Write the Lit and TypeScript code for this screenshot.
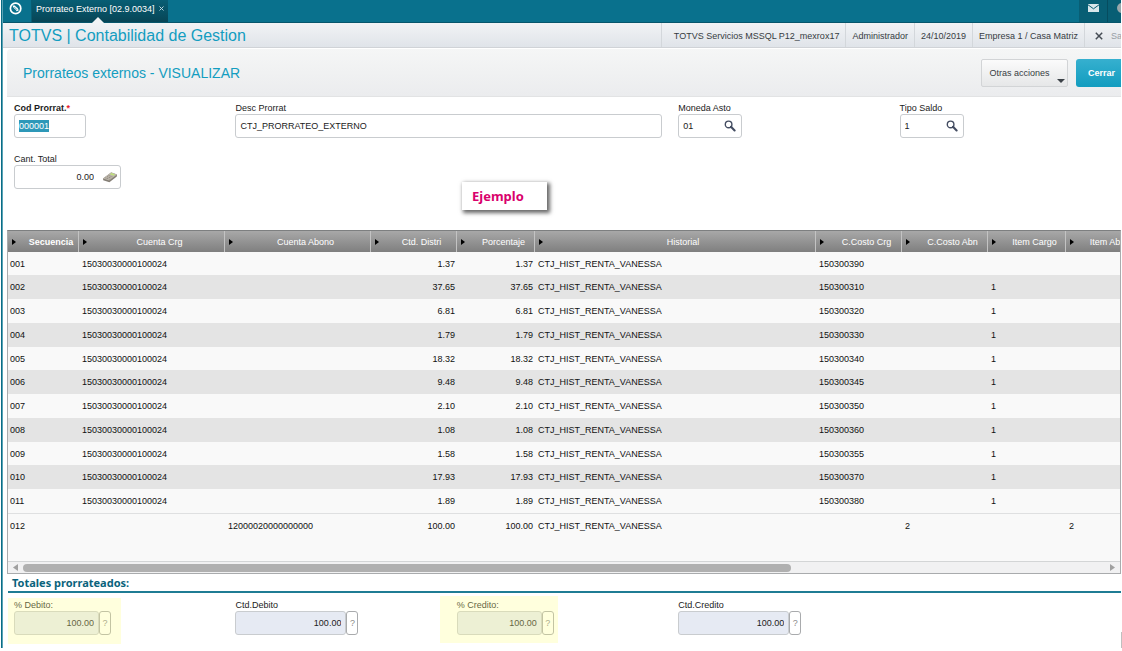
import { LitElement, html, css, svg } from "lit";
import { customElement, state, query } from "lit/decorators.js";
import { classMap } from "lit/directives/class-map.js";

interface Column {
  key: string;
  title: string;
  cls: string;
  numeric?: boolean;
}

const COLUMNS: Column[] = [
  { key: "seq", title: "Secuencia", cls: "w-seq" },
  { key: "charge", title: "Cuenta Crg", cls: "w-account" },
  { key: "credit", title: "Cuenta Abono", cls: "w-account" },
  { key: "qty", title: "Ctd. Distri", cls: "w-cost", numeric: true },
  { key: "pct", title: "Porcentaje", cls: "w-item", numeric: true },
  { key: "history", title: "Historial", cls: "w-history" },
  { key: "costCharge", title: "C.Costo Crg", cls: "w-cost" },
  { key: "costCredit", title: "C.Costo Abn", cls: "w-cost" },
  { key: "itemCharge", title: "Item Cargo", cls: "w-item" },
  { key: "itemCredit", title: "Item Abono", cls: "w-item" },
];

type Row = Record<string, string>;

const charge = (seq: string, pct: string, cost: string, item = "1"): Row => ({
  seq,
  charge: "15030030000100024",
  qty: pct,
  pct,
  history: "CTJ_HIST_RENTA_VANESSA",
  costCharge: cost,
  itemCharge: item,
});

const ROWS: Row[] = [
  charge("001", "1.37", "150300390", ""),
  charge("002", "37.65", "150300310"),
  charge("003", "6.81", "150300320"),
  charge("004", "1.79", "150300330"),
  charge("005", "18.32", "150300340"),
  charge("006", "9.48", "150300345"),
  charge("007", "2.10", "150300350"),
  charge("008", "1.08", "150300360"),
  charge("009", "1.58", "150300355"),
  charge("010", "17.93", "150300370"),
  charge("011", "1.89", "150300380"),
  {
    seq: "012",
    credit: "12000020000000000",
    qty: "100.00",
    pct: "100.00",
    history: "CTJ_HIST_RENTA_VANESSA",
    costCredit: "2",
    itemCredit: "2",
  },
];

const reset = css`
  *,
  *::before,
  *::after {
    box-sizing: border-box;
  }
  button,
  input {
    font: inherit;
    color: inherit;
    margin: 0;
    padding: 0;
    border: 0;
    background: none;
    outline: none;
  }
  svg {
    display: block;
  }
`;

const magnifier = svg`<svg width="12" height="12" viewBox="0 0 12 12" fill="none" stroke="#434c61">
  <circle cx="4.6" cy="4.4" r="3.3" stroke-width="1.4" />
  <path d="M7 6.8 L10.6 10.4" stroke-width="2.1" stroke-linecap="round" />
</svg>`;

const calculator = svg`<svg width="16" height="12" viewBox="0 0 16 12">
  <path d="M1 7.6 L9.2 1.4 L15 3.6 L14.8 5.4 L7.4 11.2 L1.2 9.2 Z" fill="#847e75" />
  <path d="M1 7.4 L9.2 1.2 L15 3.4 L7.2 9.4 Z" fill="#bdb7ac" />
  <path d="M7.8 3.3 L9.5 2 L13.2 3.4 L11.6 4.7 Z" fill="#bfe07c" />
  <path d="M3.4 6.8 L7.6 8.3 M5 5.6 L9.2 7.1 M6.6 4.5 L10.6 6" stroke="#857e74" stroke-width="0.8" stroke-dasharray="1.2 0.7" />
</svg>`;

@customElement("app-header")
class AppHeader extends LitElement {
  static styles = [
    reset,
    css`
      :host {
        display: block;
      }
      .top {
        display: flex;
        height: 23px;
        background: #09718d;
        border-bottom: 1px solid #07566c;
        color: #fff;
      }
      .logo {
        width: 28px;
        padding: 2px 0 0 6px;
      }
      .tab {
        position: relative;
        display: flex;
        align-items: center;
        gap: 3px;
        padding: 0 2px 5px 4px;
        border-left: 1px solid #085c72;
        background: linear-gradient(#085e74, #074556);
      }
      .tab::after {
        content: "";
        position: absolute;
        left: 60px;
        bottom: -1px;
        border: 6px solid transparent;
        border-top: 0;
        border-bottom-color: #f1f3f5;
      }
      .close {
        width: 8px;
        height: 8px;
        display: grid;
        place-items: center;
      }
      .tools {
        margin-left: auto;
        display: flex;
        background: #085e74;
      }
      .tool {
        width: 28px;
        display: grid;
        place-items: center;
        padding-bottom: 6px;
      }
      .tool.last {
        width: 14px;
        overflow: hidden;
        justify-content: end;
        border-left: 1px solid #064c5f;
      }
      .info {
        display: flex;
        align-items: stretch;
        height: 25px;
        background: linear-gradient(#f1f3f5, #e0e4e9);
        border-bottom: 1px solid #d0d3d7;
      }
      h1 {
        margin: 0;
        padding-left: 6px;
        font-size: 16px;
        line-height: 26px;
        font-weight: 400;
        color: #139dc0;
        white-space: nowrap;
        flex: 1;
      }
      .facts {
        display: flex;
        margin: 0;
        padding: 0;
        list-style: none;
        line-height: 26px;
        color: #363c42;
        white-space: nowrap;
      }
      .facts li {
        padding: 0 6px;
        border-left: 1px solid #d3d7db;
      }
      .facts li:first-child {
        padding-left: 12px;
      }
      .facts .leave {
        width: 37px;
        padding: 0 0 0 10px;
        overflow: hidden;
      }
      .exit {
        display: flex;
        align-items: center;
        gap: 8px;
        height: 25px;
        color: #979ea5;
      }
    `,
  ];

  render() {
    return html`
      <div class="top">
        <div class="logo">
          <svg width="14" height="14" viewBox="0 0 14 14" fill="none" stroke="#fff">
            <circle cx="6.6" cy="6.4" r="5.2" stroke-width="1.7" />
            <path d="M3.6 3.6 L6 3.6 C7 5.6 9 5 9.7 8.6 L7.4 9.3 C7 6.6 4.4 7.4 3.6 3.6 Z" fill="#fff" stroke="none" />
            <path d="M5.2 5 L8.2 8" stroke="#09718d" stroke-width="0.6" />
          </svg>
        </div>
        <div class="tab">
          <span>Prorrateo Externo [02.9.0034]</span>
          <button class="close" aria-label="Cerrar pestaña">
            <svg width="5" height="5" viewBox="0 0 5 5" stroke="#b9d5dd"><path d="M0.5 0.5 L4.5 4.5 M4.5 0.5 L0.5 4.5" /></svg>
          </button>
        </div>
        <div class="tools">
          <button class="tool" aria-label="Mensajes">
            <svg width="11" height="8" viewBox="0 0 11 8">
              <rect width="11" height="8" fill="#d9e6ea" />
              <path d="M0 0.8 L5.5 4.8 L11 0.8" fill="none" stroke="#085e74" stroke-width="1" />
            </svg>
          </button>
          <button class="tool last" aria-label="Ayuda">
            <svg width="4" height="10" viewBox="0 0 4 10"><circle cx="5" cy="5" r="5" fill="#9aa7ab" /></svg>
          </button>
        </div>
      </div>
      <div class="info">
        <h1>TOTVS | Contabilidad de Gestion</h1>
        <ul class="facts">
          <li>TOTVS Servicios MSSQL P12_mexrox17</li>
          <li>Administrador</li>
          <li>24/10/2019</li>
          <li>Empresa 1 / Casa Matriz</li>
          <li class="leave">
            <button class="exit">
              <svg width="8" height="8" viewBox="0 0 8 8" stroke="#454c54" stroke-width="1.5"><path d="M0.8 0.8 L7.2 7.2 M7.2 0.8 L0.8 7.2" /></svg>
              Salir
            </button>
          </li>
        </ul>
      </div>
    `;
  }
}

@customElement("entry-grid")
class EntryGrid extends LitElement {
  @state() private rows = ROWS;

  static styles = [
    reset,
    css`
      :host {
        display: block;
        border: 1px solid #a9abad;
        border-top-color: #7d7f80;
        overflow: hidden;
        background: #f9f9f9;
      }
      .clip {
        overflow: hidden;
        height: 330px;
      }
      table {
        table-layout: fixed;
        border-collapse: separate;
        border-spacing: 0;
        width: 1136px;
      }
      .w-seq {
        width: 71px;
      }
      .w-account {
        width: 146px;
      }
      .w-cost {
        width: 86px;
      }
      .w-item {
        width: 78px;
      }
      .w-history {
        width: 281px;
      }
      th {
        height: 21px;
        padding: 0 0 0 4px;
        font-weight: 400;
        color: #fff;
        background: linear-gradient(#a8a8a8, #7f7f7f);
        border-right: 1px solid #c3c3c3;
      }
      th:first-child {
        font-weight: 700;
      }
      .head {
        display: flex;
        align-items: center;
        gap: 8px;
        white-space: nowrap;
      }
      .head span {
        flex: 1;
        text-align: center;
      }
      .head i {
        border: 3px solid transparent;
        border-left: 4px solid #000;
        border-right: 0;
      }
      td {
        height: 24px;
        padding: 0 3px;
        line-height: 12px;
        white-space: nowrap;
        color: #111;
      }
      td:first-child {
        padding-left: 2px;
      }
      tr:nth-child(4n + 1) td {
        height: 23px;
      }
      tr:nth-child(even) td {
        background: #e4e4e4;
      }
      td.num {
        text-align: right;
        padding-right: 2px;
      }
      tr.current td {
        height: 48px;
        padding-top: 6px;
        vertical-align: top;
        background: #f9f9f9;
        border-top: 1px solid #dfe0e1;
      }
      .scroll {
        display: flex;
        align-items: center;
        height: 12px;
        background: #f1f1f2;
        border-top: 1px solid #d3d5d6;
      }
      .arrow {
        width: 15px;
        display: grid;
        place-items: center;
      }
      .track {
        flex: 1;
      }
      .thumb {
        width: 71%;
        height: 8px;
        border-radius: 4px;
        background: #b0b0b0;
      }
    `,
  ];

  render() {
    return html`
      <div class="clip">
        <table>
          <colgroup>
            ${COLUMNS.map((c) => html`<col class=${c.cls} />`)}
          </colgroup>
          <thead>
            <tr>
              ${COLUMNS.map((c) => html`<th scope="col"><div class="head"><i></i><span>${c.title}</span></div></th>`)}
            </tr>
          </thead>
          <tbody>
            ${this.rows.map(
              (r) => html`<tr class=${classMap({ current: r.seq === "012" })}>
                ${COLUMNS.map((c) => html`<td class=${classMap({ num: !!c.numeric })}>${r[c.key] ?? ""}</td>`)}
              </tr>`
            )}
          </tbody>
        </table>
      </div>
      <div class="scroll">
        <button class="arrow" aria-label="Desplazar a la izquierda">
          <svg width="5" height="7" viewBox="0 0 5 7"><path d="M5 0 V7 L0 3.5 Z" fill="#a0a0a0" /></svg>
        </button>
        <div class="track"><div class="thumb"></div></div>
        <button class="arrow" aria-label="Desplazar a la derecha">
          <svg width="5" height="7" viewBox="0 0 5 7"><path d="M0 0 V7 L5 3.5 Z" fill="#a0a0a0" /></svg>
        </button>
      </div>
    `;
  }
}

@customElement("app-root")
class AppRoot extends LitElement {
  @query("#code") private code!: HTMLInputElement;

  static styles = [
    reset,
    css`
      :host {
        display: block;
        position: relative;
        overflow: hidden;
        margin-left: 1px;
        border-left: 1px solid #0a6c86;
        background: #fff;
        font: 9px/12px "Liberation Sans", Arial, sans-serif;
        color: #1b1b1b;
      }
      .frame {
        padding-right: 1px;
        border-left: 1px solid #5aa3b5;
      }
      .bar {
        display: flex;
        align-items: center;
        height: 48px;
        margin: 1px 0 0 4px;
        background: linear-gradient(#f5f6f6, #ebecee);
        border-bottom: 1px solid #e2e3e4;
        border-top-left-radius: 4px;
      }
      h2 {
        flex: 1;
        margin: 0;
        padding-left: 16px;
        font-size: 14px;
        line-height: 20px;
        font-weight: 400;
        color: #139dc0;
      }
      .action {
        position: relative;
        width: 87px;
        height: 28px;
        margin-right: 8px;
        padding-right: 10px;
        border: 1px solid #d2d4d6;
        border-radius: 2px;
        background: linear-gradient(#fbfbfb, #e6e7e8);
        color: #363c42;
      }
      .action::after {
        content: "";
        position: absolute;
        right: 2px;
        bottom: 3px;
        border: 4px solid transparent;
        border-top-color: #3c4248;
        border-bottom: 0;
      }
      .primary {
        width: 45px;
        height: 28px;
        padding-left: 6px;
        border-radius: 3px 0 0 3px;
        background: linear-gradient(#36b0cf, #129cbf);
        color: #fff;
        font-weight: 700;
        text-align: center;
      }
      .form {
        position: relative;
        height: 133px;
        padding: 5px 0 0 11px;
      }
      .fields {
        display: grid;
        grid-template-columns: repeat(5, 1fr);
        row-gap: 15px;
      }
      .field {
        position: relative;
        min-width: 0;
      }
      .wide {
        grid-column: span 2;
        padding-right: 16px;
      }
      .new-row {
        grid-column: 1;
      }
      label {
        display: block;
        line-height: 12px;
      }
      .required label {
        font-weight: 700;
      }
      .star {
        color: #e8202c;
      }
      .box {
        display: flex;
        align-items: center;
        height: 24px;
        border: 1px solid #c9cccf;
        border-radius: 3px;
        background: #fff;
      }
      .box input {
        flex: 1;
        min-width: 0;
        padding: 0 4px;
      }
      .box button {
        flex: none;
        margin-right: 5px;
      }
      .short {
        width: 72px;
      }
      .lookup {
        width: 64px;
      }
      .amount {
        width: 107px;
      }
      .amount input,
      .total input {
        text-align: right;
      }
      .amount input {
        padding-right: 8px;
      }
      .amount button {
        margin-right: 2px;
      }
      input::selection {
        background: #2e98b8;
        color: #fff;
      }
      .note {
        position: absolute;
        left: 459px;
        top: 85px;
        width: 85px;
        height: 28px;
        padding-left: 10px;
        background: #fff;
        box-shadow: 2px 2px 4px 1px rgba(0, 0, 0, 0.6);
        font: 700 13px/28px "Noto Sans", Verdana, sans-serif;
        color: #d9006c;
      }
      entry-grid {
        margin: 0 0 0 4px;
      }
      h3 {
        margin: 0 0 0 5px;
        padding-left: 4px;
        border-bottom: 2px solid #1f7c94;
        font: 700 11px/17px "Noto Sans", Verdana, sans-serif;
        color: #0a637c;
      }
      .totals {
        padding: 6px 0 13px 11px;
      }
      .total {
        display: flex;
      }
      .total input {
        width: 111px;
        height: 24px;
        padding-right: 4px;
        border: 1px solid #c9cccf;
        border-radius: 3px;
        background: #e6eaf3;
      }
      .marked .total input {
        width: 85px;
      }
      .total button {
        width: 12px;
        height: 24px;
        border: 1px solid #a9abad;
        border-radius: 3px;
        background: #fff;
        color: #8b8b8b;
      }
      .marked::after {
        content: "";
        position: absolute;
        inset: -1px auto -9px -6px;
        width: 113px;
        background: rgba(255, 255, 141, 0.3);
        pointer-events: none;
      }
      .marked.second::after {
        inset: -3px auto -8px -17px;
        width: 118px;
      }
      .grip {
        position: absolute;
        right: 0;
        bottom: 0;
        width: 1px;
        height: 16px;
        background: #bfbfbf;
      }
    `,
  ];

  firstUpdated() {
    this.code.focus();
    this.code.select();
  }

  private lookup(id: string, label: string, value: string) {
    return html`<div class="field">
      <label for=${id}>${label}</label>
      <div class="box lookup">
        <input id=${id} .value=${value} />
        <button aria-label="Buscar">${magnifier}</button>
      </div>
    </div>`;
  }

  private total(id: string, label: string, marked = false, second = false) {
    return html`<div class=${classMap({ field: true, marked, second })}>
      <label for=${id}>${label}</label>
      <div class="total">
        <input id=${id} readonly .value=${"100.00"} />
        <button aria-label="Ayuda">?</button>
      </div>
    </div>`;
  }

  render() {
    return html`
      <div class="frame">
        <app-header></app-header>
        <div class="bar">
          <h2>Prorrateos externos - VISUALIZAR</h2>
          <button class="action" aria-haspopup="menu">Otras acciones</button>
          <button class="primary">Cerrar</button>
        </div>
        <section class="form">
          <div class="fields">
            <div class="field required">
              <label for="code">Cod Prorrat.<span class="star">*</span></label>
              <div class="box short"><input id="code" .value=${"000001"} /></div>
            </div>
            <div class="field wide">
              <label for="desc">Desc Prorrat</label>
              <div class="box"><input id="desc" .value=${"CTJ_PRORRATEO_EXTERNO"} /></div>
            </div>
            ${this.lookup("currency", "Moneda Asto", "01")} ${this.lookup("balance", "Tipo Saldo", "1")}
            <div class="field new-row">
              <label for="quantity">Cant. Total</label>
              <div class="box amount">
                <input id="quantity" .value=${"0.00"} />
                <button aria-label="Calculadora">${calculator}</button>
              </div>
            </div>
          </div>
          <div class="note">Ejemplo</div>
        </section>
        <entry-grid></entry-grid>
        <h3>Totales prorrateados:</h3>
        <section class="totals">
          <div class="fields">
            ${this.total("pct-debit", "% Debito:", true)} ${this.total("qty-debit", "Ctd.Debito")}
            ${this.total("pct-credit", "% Credito:", true, true)} ${this.total("qty-credit", "Ctd.Credito")}
          </div>
        </section>
      </div>
      <div class="grip"></div>
    `;
  }
}
